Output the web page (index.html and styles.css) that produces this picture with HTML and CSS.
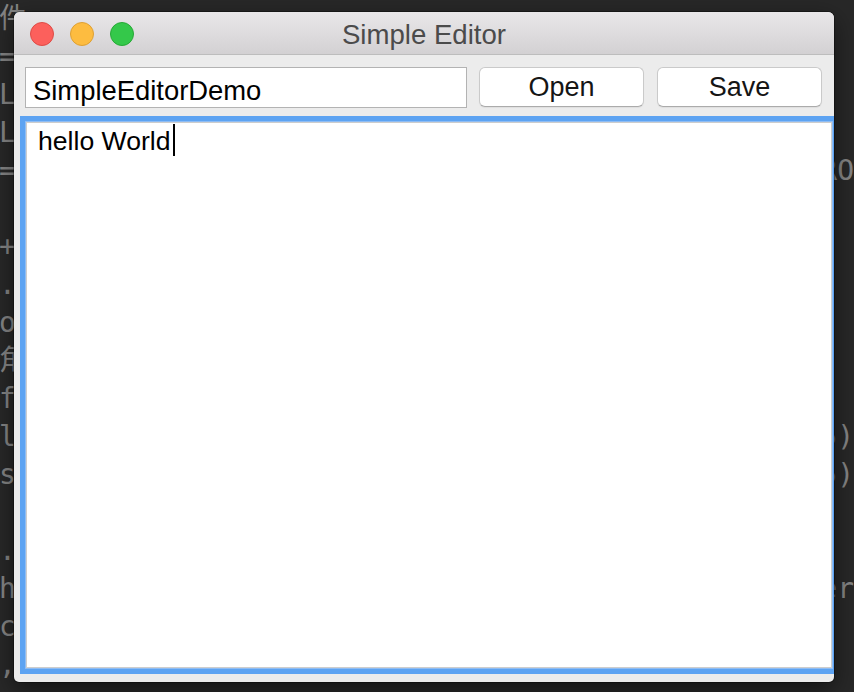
FILE: index.html
```html
<!DOCTYPE html>
<html>
<head>
<meta charset="utf-8">
<title>Simple Editor</title>
<link rel="stylesheet" href="styles.css">
</head>
<body>
<div class="desktop">
<pre class="code code-left">件
=
L
L
=

+
.
o
角
f
l
s

.
h
c
,</pre>
<pre class="code code-right"> 
 
 
 
RO
 
 
 
 
 
 
5)
5)
 
 
er
 
 </pre>
</div>
<div class="window">
  <div class="titlebar">
    <div class="lights">
      <span class="light red"></span>
      <span class="light yellow"></span>
      <span class="light green"></span>
    </div>
    <div class="title">Simple Editor</div>
    <div></div>
  </div>
  <div class="toolbar">
    <div class="field">SimpleEditorDemo</div>
    <button class="btn">Open</button>
    <button class="btn">Save</button>
  </div>
  <div class="editor"><span class="text">hello World</span><span class="caret"></span></div>
</div>
</body>
</html>
```
FILE: styles.css
```css
html, body {
  margin: 0;
  padding: 0;
}
body {
  width: 854px;
  height: 692px;
  overflow: hidden;
  background: #282828;
  position: relative;
}
.desktop {
  display: flex;
  justify-content: space-between;
  height: 692px;
  overflow: hidden;
}
.code {
  margin: 0;
  font-family: "DejaVu Sans Mono", "Noto Sans CJK SC", monospace;
  font-size: 28px;
  line-height: 38px;
  color: #858585;
}
.code-left {
  margin-left: -1px;
}
.code-right {
  text-align: right;
  margin-right: 0;
}
.window {
  position: absolute;
  left: 14px;
  top: 12px;
  width: 820px;
  height: 670px;
  background: #ececec;
  border-radius: 6px 6px 5px 5px;
  overflow: hidden;
  box-shadow: 0 8px 24px rgba(0, 0, 0, 0.5), 0 0 0 1px rgba(0, 0, 0, 0.3);
  font-family: "Liberation Sans", Arial, sans-serif;
}
.titlebar {
  height: 42px;
  border-bottom: 1px solid #bdbdbd;
  background: linear-gradient(#e9e7e9, #d3d1d3);
  display: grid;
  grid-template-columns: 1fr auto 1fr;
  align-items: center;
}
.lights {
  display: flex;
  gap: 16px;
  padding-left: 16px;
  padding-top: 2px;
}
.light {
  width: 24px;
  height: 24px;
  border-radius: 50%;
  box-sizing: border-box;
  display: block;
}
.red {
  background: #fc605c;
  border: 1px solid #de4b46;
}
.yellow {
  background: #fdbc40;
  border: 1px solid #dea033;
}
.green {
  background: #34c84a;
  border: 1px solid #27a936;
}
.title {
  font-size: 27.6px;
  color: #4b4b4b;
  padding-top: 3px;
}
.toolbar {
  display: flex;
  padding: 12px 12px 0 11px;
  align-items: flex-start;
}
.field {
  width: 442px;
  height: 41px;
  box-sizing: border-box;
  border: 1px solid #b3b3b3;
  background: #fff;
  padding: 5px 7px 0;
  font-size: 27.4px;
  line-height: 35px;
  color: #000;
  white-space: nowrap;
}
.btn {
  width: 165px;
  height: 40px;
  box-sizing: border-box;
  margin-left: 12px;
  background: #fff;
  border: 1px solid #cacaca;
  border-bottom-color: #ababab;
  border-radius: 6px;
  box-shadow: 0 1px 1px rgba(0, 0, 0, 0.06);
  font-family: "Liberation Sans", Arial, sans-serif;
  font-size: 27px;
  line-height: 36px;
  padding: 1px 0 1px;
  color: #151515;
}
.btn + .btn {
  margin-left: 13px;
}
.editor {
  margin: 14px 0 0 12px;
  width: 806px;
  height: 546px;
  box-sizing: border-box;
  background: #fff;
  border: 1px solid #cdcdcd;
  box-shadow: 0 0 0 1px #8fbdf4, 0 0 0 6px #5da3f2;
  padding: 2px 0 0 11px;
  font-size: 26.6px;
  line-height: 32px;
  color: #000;
}
.caret {
  display: inline-block;
  width: 2px;
  height: 32px;
  margin-left: 2px;
  margin-top: -1px;
  background: #000;
  vertical-align: top;
}
```
